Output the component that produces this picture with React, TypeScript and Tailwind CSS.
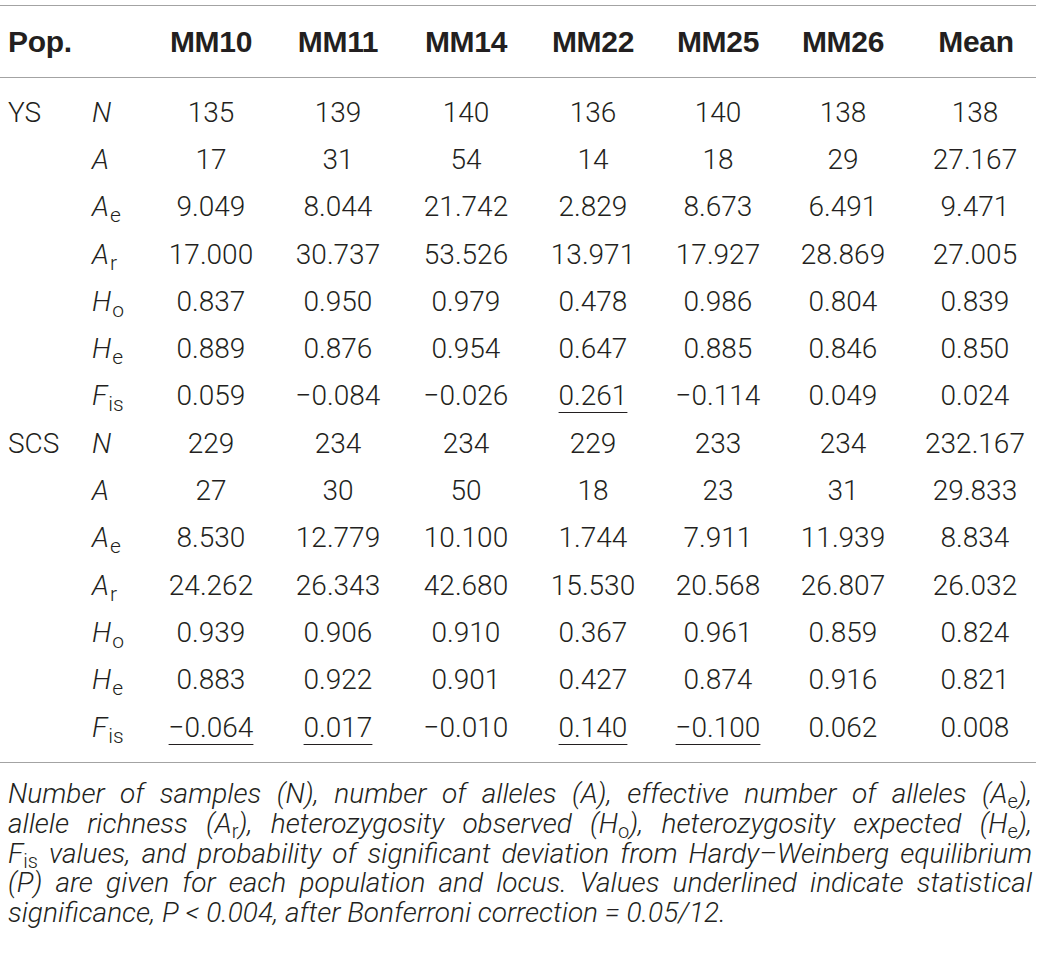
import React from "react";

type Cell = { v: string; u?: boolean };

const cols = ["MM10", "MM11", "MM14", "MM22", "MM25", "MM26", "Mean"];

function Param({ p, sub }: { p: string; sub?: string }) {
  return (
    <span className="whitespace-nowrap">
      <span className="italic">{p}</span>
      {sub && <span className="text-[21px] leading-none relative top-[6px] ml-[1px]">{sub}</span>}
    </span>
  );
}

// caption subscript, kept inline so the line box doesn't grow
function Sub({ t }: { t: string }) {
  return <span className="not-italic text-[20px] leading-[0] relative top-[5px]">{t}</span>;
}

const groups: { pop: string; rows: { p: string; sub?: string; vals: Cell[] }[] }[] = [
  {
    pop: "YS",
    rows: [
      { p: "N", vals: ["135", "139", "140", "136", "140", "138", "138"].map((v) => ({ v })) },
      { p: "A", vals: ["17", "31", "54", "14", "18", "29", "27.167"].map((v) => ({ v })) },
      { p: "A", sub: "e", vals: ["9.049", "8.044", "21.742", "2.829", "8.673", "6.491", "9.471"].map((v) => ({ v })) },
      { p: "A", sub: "r", vals: ["17.000", "30.737", "53.526", "13.971", "17.927", "28.869", "27.005"].map((v) => ({ v })) },
      { p: "H", sub: "o", vals: ["0.837", "0.950", "0.979", "0.478", "0.986", "0.804", "0.839"].map((v) => ({ v })) },
      { p: "H", sub: "e", vals: ["0.889", "0.876", "0.954", "0.647", "0.885", "0.846", "0.850"].map((v) => ({ v })) },
      {
        p: "F",
        sub: "is",
        vals: [
          { v: "0.059" },
          { v: "\u22120.084" },
          { v: "\u22120.026" },
          { v: "0.261", u: true },
          { v: "\u22120.114" },
          { v: "0.049" },
          { v: "0.024" },
        ],
      },
    ],
  },
  {
    pop: "SCS",
    rows: [
      { p: "N", vals: ["229", "234", "234", "229", "233", "234", "232.167"].map((v) => ({ v })) },
      { p: "A", vals: ["27", "30", "50", "18", "23", "31", "29.833"].map((v) => ({ v })) },
      { p: "A", sub: "e", vals: ["8.530", "12.779", "10.100", "1.744", "7.911", "11.939", "8.834"].map((v) => ({ v })) },
      { p: "A", sub: "r", vals: ["24.262", "26.343", "42.680", "15.530", "20.568", "26.807", "26.032"].map((v) => ({ v })) },
      { p: "H", sub: "o", vals: ["0.939", "0.906", "0.910", "0.367", "0.961", "0.859", "0.824"].map((v) => ({ v })) },
      { p: "H", sub: "e", vals: ["0.883", "0.922", "0.901", "0.427", "0.874", "0.916", "0.821"].map((v) => ({ v })) },
      {
        p: "F",
        sub: "is",
        vals: [
          { v: "\u22120.064", u: true },
          { v: "0.017", u: true },
          { v: "\u22120.010" },
          { v: "0.140", u: true },
          { v: "\u22120.100", u: true },
          { v: "0.062" },
          { v: "0.008" },
        ],
      },
    ],
  },
];

const grid = "grid grid-cols-[85px_63px_126px_128px_128px_126px_124px_126px_1fr] items-center";
const line = "text-justify [text-align-last:justify]";

export default function App() {
  return (
    <div className="w-[1040px] h-[961px] bg-white text-[#231f20] font-['Roboto','Liberation_Sans',sans-serif] font-light overflow-hidden">
      <div className="pt-[5px] w-[1036px]">
        <div className="border-t border-[#a3a3a3]" />
        {/* header */}
        <div className={`${grid} h-[71px] text-[30px] font-bold font-['Liberation_Sans',sans-serif] tracking-[-0.3px]`}>
          <div className="pl-[8px]">Pop.</div>
          <div />
          {cols.map((c) => (
            <div key={c} className={`text-center ${c === "Mean" ? "pl-[10px]" : ""}`}>
              {c}
            </div>
          ))}
        </div>
        <div className="border-t border-[#a3a3a3]" />
        {/* body */}
        <div className="py-[11px] text-[28px]">
          {groups.map((g) =>
            g.rows.map((r, i) => (
              <div key={g.pop + i} className={`${grid} h-[47.3px]`}>
                <div className="pl-[8px]">{i === 0 ? g.pop : ""}</div>
                <div className="pl-[7px]">
                  <Param p={r.p} sub={r.sub} />
                </div>
                {r.vals.map((c, j) => (
                  <div key={j} className={`text-center ${j === 6 ? "pl-[8px]" : ""}`}>
                    <span className={c.u ? "underline decoration-1 underline-offset-[7px]" : ""}>{c.v}</span>
                  </div>
                ))}
              </div>
            ))
          )}
        </div>
        <div className="border-t border-[#a3a3a3]" />
      </div>
      {/* caption */}
      <div className="px-[8px] pt-[16px] w-[1040px] text-[28px] leading-[29.7px] italic font-light">
        <div className={line}>
          Number of samples (N), number of alleles (A), effective number of alleles (A<Sub t="e" />),
        </div>
        <div className={line}>
          allele richness (A<Sub t="r" />), heterozygosity observed (H<Sub t="o" />), heterozygosity expected (H
          <Sub t="e" />),
        </div>
        <div className={line}>
          F<Sub t="is" /> values, and probability of significant deviation from Hardy–Weinberg equilibrium
        </div>
        <div className={line}>
          (P) are given for each population and locus. Values underlined indicate statistical
        </div>
        <div>significance, P &lt; 0.004, after Bonferroni correction = 0.05/12.</div>
      </div>
    </div>
  );
}
